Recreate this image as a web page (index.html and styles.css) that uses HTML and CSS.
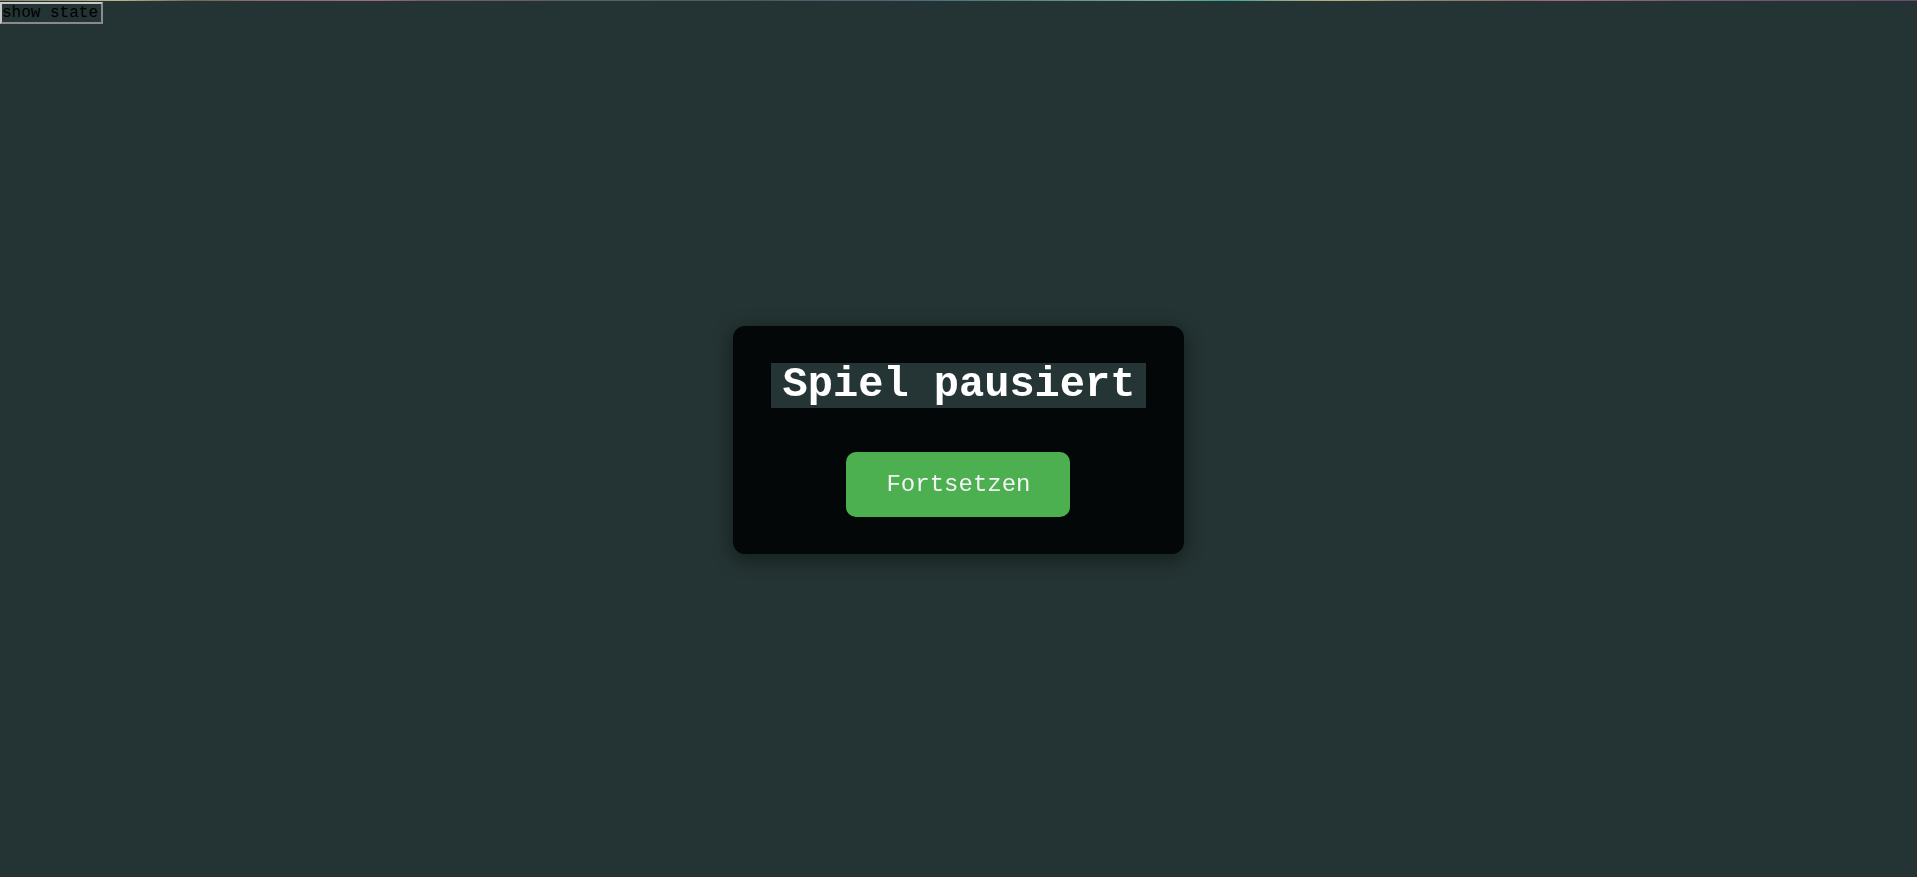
FILE: index.html
```html
<!DOCTYPE html>
<html lang="de">
<head>
<meta charset="utf-8">
<title>Spiel pausiert</title>
<link rel="stylesheet" href="styles.css">
</head>
<body>
<div class="strip"></div>
<button class="state-btn">show state</button>
<div class="overlay">
  <div class="modal">
    <h1 class="modal-title">Spiel pausiert</h1>
    <button class="resume-btn">Fortsetzen</button>
  </div>
</div>
</body>
</html>
```
FILE: styles.css
```css
html, body {
  margin: 0;
  padding: 0;
  height: 100%;
}
body {
  background: #243333;
  font-family: "Courier New", "Nimbus Mono PS", "Nimbus Mono L", "FreeMono", Courier, "Liberation Mono", monospace;
  overflow: hidden;
}
.strip {
  height: 1px;
  background: linear-gradient(90deg,
    #8a8a6a 0%, #b9b98a 6%, #6f6a5a 10%, #9a6a74 14%, #a06a80 20%, #7e5a78 22%,
    #5a5f6a 30%, #4a5a66 40%, #4f6a78 48%, #5a8a88 54%, #7fa893 60%, #3aa89a 64%,
    #9aa88a 67%, #b8b27a 70%, #8a8a7a 74%, #9a6a70 79%, #a36a7a 82%, #7a5a78 88%, #6a4a6a 100%);
}
.state-btn {
  display: block;
  margin: 1px 0 0 0;
  padding: 0 1px 0 0;
  height: 22px;
  width: 103px;
  background: transparent;
  border: 2px solid;
  border-color: #c8c8c8 #8a8a8a #8a8a8a #c8c8c8;
  color: #000;
  font-family: inherit;
  font-size: 16px;
  line-height: 18px;
  text-align: left;
}
.overlay {
  position: fixed;
  inset: 0;
  display: flex;
  align-items: center;
  justify-content: center;
  padding-top: 3px;
}
.modal {
  background: #030707;
  border-radius: 12px;
  padding: 37px 38px 37px;
  display: flex;
  flex-direction: column;
  align-items: center;
  gap: 44px;
  box-shadow: 0 4px 20px rgba(0, 0, 0, 0.45);
}
.modal-title {
  margin: 0;
  padding: 0 11px 0 12px;
  background: #253535;
  color: #fff;
  font-family: inherit;
  font-weight: bold;
  font-size: 42px;
  line-height: 45px;
}
.resume-btn {
  width: 224px;
  height: 65px;
  padding: 0;
  border: none;
  border-radius: 10px;
  background: #4caf50;
  color: #f4f4f4;
  font-family: inherit;
  font-size: 24px;
}
```
